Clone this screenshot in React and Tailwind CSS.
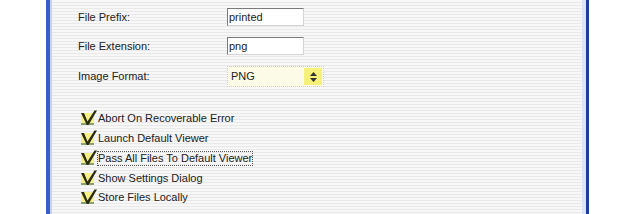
import React from "react";

const fields = [
  { label: "File Prefix:", value: "printed" },
  { label: "File Extension:", value: "png" },
];

const options = [
  "Abort On Recoverable Error",
  "Launch Default Viewer",
  "Pass All Files To Default Viewer",
  "Show Settings Dialog",
  "Store Files Locally",
];

function Check() {
  return (
    <span className="relative w-[17px] h-[17px] shrink-0">
      <span className="absolute left-[1px] top-[3px] w-[13px] h-[12px] bg-[#f6f08a] border-b-2 border-[#8aa070]" />
      <svg className="absolute left-0 top-0" width="18" height="17" viewBox="0 0 18 17">
        <path d="M1 3 L4 3 L7.5 11.5 L14.5 0.5 L17 0.5 L8.5 15 L6.8 15 Z" fill="#2b2b10" />
      </svg>
    </span>
  );
}

export default function App() {
  return (
    <div className="w-[631px] h-[214px] bg-white flex font-['Liberation_Sans',sans-serif] text-[11px] text-[#222]">
      <div className="ml-[46px] w-[4px] bg-[#3b5fc8]" />
      <div className="w-[2px] bg-[#c6d3f4]" />
      <div className="w-[530px] flex flex-col bg-[repeating-linear-gradient(180deg,#f7f7f7_0px,#f7f7f7_2px,#e9e9e9_2px,#e9e9e9_3px)] pl-[26px]">
        {fields.map((f, i) => (
          <div key={i} className="flex items-center h-[18px] mt-[8px] mb-[3px]">
            <span className="w-[149px]">{f.label}</span>
            <div className="w-[77px] h-[18px] bg-white border border-[#7a7a7a] border-r-[#d4d4d4] border-b-[#d4d4d4] flex items-center pl-[1px] text-[11px]">
              {f.value}
            </div>
          </div>
        ))}
        <div className="flex items-center h-[21px] mt-[8px]">
          <span className="w-[149px]">Image Format:</span>
          <div className="w-[97px] h-[21px] flex bg-[#fbfbe8] border border-dotted border-[#ccc]">
            <span className="flex-1 flex items-center pl-[3px] text-[11px]">PNG</span>
            <span className="w-[18px] my-[1px] mr-[1px] bg-[#f5f07a] flex items-center justify-center">
              <svg width="7" height="10" viewBox="0 0 7 10">
                <path d="M3.5 0 L7 4 L0 4 Z M0 6 L7 6 L3.5 10 Z" fill="#333" />
              </svg>
            </span>
          </div>
        </div>
        <div className="flex flex-col mt-[22px] pl-[2px]">
          {options.map((o, i) => (
            <div key={i} className="flex items-center h-[19.75px] gap-[1px]">
              <Check />
              <span className={i === 2 ? "outline outline-1 outline-dotted outline-[#555] leading-[13px]" : "leading-[13px]"}>{o}</span>
            </div>
          ))}
        </div>
      </div>
      <div className="w-[4px] bg-[#dde4f5]" />
      <div className="w-[3px] bg-[#1f3b9c]" />
    </div>
  );
}
